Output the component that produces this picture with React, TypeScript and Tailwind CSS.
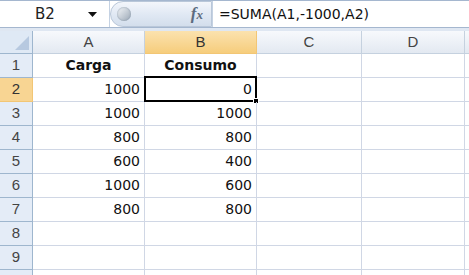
import { FC } from "react";

const cols = ["A", "B", "C", "D"];

const data: { [row: number]: [string, string] } = {
  1: ["Carga", "Consumo"],
  2: ["1000", "0"],
  3: ["1000", "1000"],
  4: ["800", "800"],
  5: ["600", "400"],
  6: ["1000", "600"],
  7: ["800", "800"],
};

// row 10 is only a sliver at the bottom edge, its number is not visible
const rows = [1, 2, 3, 4, 5, 6, 7, 8, 9, 10];

const FormulaBar: FC = () => (
  <div className="flex h-[28px] border-t border-b border-[#a5b7cf] bg-white">
    <div className="flex w-[110px] items-center border-r border-[#c5d2e3]">
      <span className="w-[90px] text-center text-[15px] text-[#222]">B2</span>
      <svg width="9" height="5" viewBox="0 0 9 5" className="ml-[-2px]">
        <path d="M0 0h9L4.5 5z" fill="#111" />
      </svg>
    </div>
    <div className="flex w-[102px] items-center rounded-l-full border border-[#b9c7d9] bg-gradient-to-b from-[#f3f6fb] via-[#e1e9f4] to-[#d3deec] pl-[6px] pr-[8px]">
      <div className="h-[14px] w-[14px] rounded-full bg-gradient-to-br from-[#f7f9fb] to-[#9aa7b5] shadow-[inset_0_0_2px_#8393a5]" />
      <span className="ml-auto font-['Liberation_Serif',serif] text-[17px] italic font-bold text-[#5d6c80]">
        f<span className="text-[13px]">x</span>
      </span>
    </div>
    <div className="flex flex-1 items-center border-l border-[#c5d2e3] pl-[6px] text-[14px] text-[#111]">
      =SUMA(A1,-1000,A2)
    </div>
  </div>
);

const App: FC = () => {
  return (
    <div className="h-[275px] w-[469px] overflow-hidden bg-white font-['DejaVu_Sans',sans-serif]">
      <FormulaBar />
      <div className="h-[3px] bg-[#dfe7f2]" />
      <div className="grid grid-cols-[33px_112px_112px_105px_103px_1fr] grid-rows-[23px] auto-rows-[24px]">
        <div className="relative border-r border-b border-[#9eb6ce] bg-[#dfe9f5]">
          <svg width="14" height="14" viewBox="0 0 14 14" className="absolute bottom-[3px] right-[3px]">
            <path d="M14 0V14H0z" fill="#b7c9e0" />
          </svg>
        </div>
        {cols.map((c) => (
          <div
            key={c}
            className={
              c === "B"
                ? "flex items-center justify-center border-r border-b border-[#f2c675] bg-gradient-to-b from-[#fbe2ae] to-[#f6cd7c] font-['Liberation_Sans',sans-serif] text-[15px] text-[#333]"
                : "flex items-center justify-center border-r border-b border-[#c5d1df] bg-gradient-to-b from-[#f7f9fc] to-[#e3e9f1] font-['Liberation_Sans',sans-serif] text-[15px] text-[#444]"
            }
          >
            {c}
          </div>
        ))}
        <div className="border-b border-[#c5d1df] bg-gradient-to-b from-[#f7f9fc] to-[#e3e9f1]" />

        {rows.map((r) => {
          const d = data[r];
          return [
            <div
              key={`h${r}`}
              className={
                r === 2
                  ? "flex items-center justify-center border-r border-b border-[#f2c675] bg-[#f8d593] font-['Liberation_Sans',sans-serif] text-[15px] text-[#333]"
                  : "flex items-center justify-center border-r border-b border-[#9eb6ce] bg-[#e4ecf7] font-['Liberation_Sans',sans-serif] text-[15px] text-[#444]"
              }
            >
              {r < 10 ? r : ""}
            </div>,
            <div
              key={`a${r}`}
              className={
                r === 1
                  ? "flex items-center justify-center border-r border-b border-[#d0d7e5] text-[14px] font-bold text-[#111]"
                  : "flex items-center justify-end border-r border-b border-[#d0d7e5] pr-[4px] text-[14px] text-[#111]"
              }
            >
              {d ? d[0] : ""}
            </div>,
            <div
              key={`b${r}`}
              className={
                r === 1
                  ? "flex items-center justify-center border-r border-b border-[#d0d7e5] text-[14px] font-bold text-[#111]"
                  : "relative flex items-center justify-end border-r border-b border-[#d0d7e5] pr-[4px] text-[14px] text-[#111]"
              }
            >
              {d ? d[1] : ""}
              {r === 2 && (
                <>
                  <div className="absolute -top-[2px] -left-[1px] -right-[1px] -bottom-[1px] border-2 border-black" />
                  <div className="absolute -bottom-[3px] -right-[3px] h-[6px] w-[6px] border border-white bg-black" />
                </>
              )}
            </div>,
            <div key={`c${r}`} className="border-r border-b border-[#d0d7e5]" />,
            <div key={`d${r}`} className="border-r border-b border-[#d0d7e5]" />,
            <div key={`e${r}`} className="border-b border-[#d0d7e5]" />,
          ];
        })}
      </div>
    </div>
  );
};

export default App;
